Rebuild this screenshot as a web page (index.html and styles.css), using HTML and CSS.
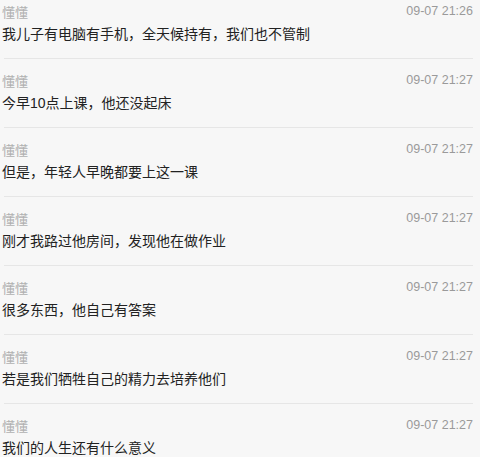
FILE: index.html
```html
<!DOCTYPE html>
<html lang="zh-CN">
<head>
    <meta charset="UTF-8">
    <meta name="viewport" content="width=device-width, initial-scale=1.0">
    <title>消息</title>
    <link rel="stylesheet" href="styles.css">
</head>
<body>
    <div class="list">
        <div class="item">
            <div class="item-head"><span class="name">懂懂</span><span class="time">09-07 21:26</span></div>
            <p class="text">我儿子有电脑有手机，全天候持有，我们也不管制</p>
        </div>
        <div class="item">
            <div class="item-head"><span class="name">懂懂</span><span class="time">09-07 21:27</span></div>
            <p class="text">今早10点上课，他还没起床</p>
        </div>
        <div class="item">
            <div class="item-head"><span class="name">懂懂</span><span class="time">09-07 21:27</span></div>
            <p class="text">但是，年轻人早晚都要上这一课</p>
        </div>
        <div class="item">
            <div class="item-head"><span class="name">懂懂</span><span class="time">09-07 21:27</span></div>
            <p class="text">刚才我路过他房间，发现他在做作业</p>
        </div>
        <div class="item">
            <div class="item-head"><span class="name">懂懂</span><span class="time">09-07 21:27</span></div>
            <p class="text">很多东西，他自己有答案</p>
        </div>
        <div class="item">
            <div class="item-head"><span class="name">懂懂</span><span class="time">09-07 21:27</span></div>
            <p class="text">若是我们牺牲自己的精力去培养他们</p>
        </div>
        <div class="item">
            <div class="item-head"><span class="name">懂懂</span><span class="time">09-07 21:27</span></div>
            <p class="text">我们的人生还有什么意义</p>
        </div>
    </div>
</body>
</html>
```

FILE: styles.css
```css
* {
    margin: 0;
    padding: 0;
    box-sizing: border-box;
}

body {
    background: #f7f7f7;
    font-family: "Liberation Sans", "Noto Sans CJK SC", sans-serif;
    overflow: hidden;
}

.list {
    margin-top: -10px;
}

.item {
    padding: 10px 7px 0 2px;
}

.item::after {
    content: "";
    display: block;
    height: 1px;
    margin: 12px 0 0 2px;
    background: #e6e6e6;
}

.item-head {
    display: flex;
    justify-content: space-between;
    align-items: center;
    height: 22px;
}

.name {
    font-size: 13px;
    color: #b0b0b0;
}

.time {
    font-size: 12.5px;
    color: #9a9a9a;
}

.text {
    font-size: 14px;
    line-height: 24px;
    color: #222;
}
```
